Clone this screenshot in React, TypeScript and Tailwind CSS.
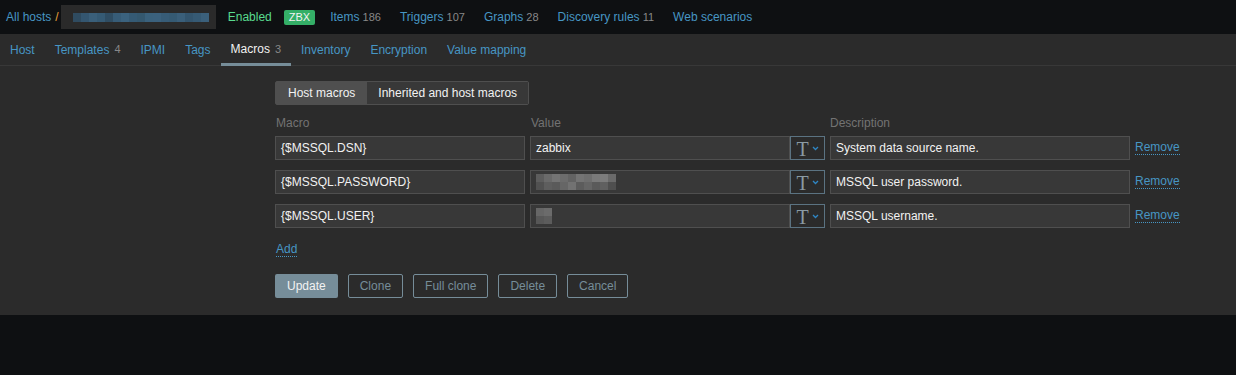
import React from "react";

const font = { fontFamily: '"Liberation Sans", Arial, sans-serif' };

function Blur({ cells, h }: { cells: string[][]; h: number }) {
  return (
    <div className="flex flex-col">
      {cells.map((row, i) => (
        <div key={i} className="flex">
          {row.map((c, j) => (
            <div key={j} className="w-[8px]" style={{ height: h, background: c }} />
          ))}
        </div>
      ))}
    </div>
  );
}

const hostBlur = [
  ["#2f4b60", "#345670", "#3a5f7a", "#355a74", "#2f4d63", "#375c77", "#3b627e", "#355a74", "#34586f", "#3a617c", "#3b617d", "#375c77", "#355a73", "#3a5f7a", "#33556e", "#365a74", "#3b607b"],
];

const pwBlur = [
  ["#5d5d5d", "#6a6a6a", "#747474", "#6c6c6c", "#636363", "#747474", "#6f6f6f", "#7a7a7a", "#7c7c7c", "#6a6a6a"],
  ["#515151", "#5e5e5e", "#5a5a5a", "#666666", "#727272", "#5c5c5c", "#656565", "#5a5a5a", "#606060", "#4f4f4f"],
];

const userBlur = [["#666666", "#6b6b6b"], ["#575757", "#5c5c5c"]];

function TopLink({ label, count }: { label: string; count?: string }) {
  return (
    <span className="text-[#4796c4] mr-[19px]">
      {label}
      {count && <span className="text-[#888888] text-[11px]"> {count}</span>}
    </span>
  );
}

const tabs = [
  { l: "Host" },
  { l: "Templates", c: "4" },
  { l: "IPMI" },
  { l: "Tags" },
  { l: "Macros", c: "3", active: true },
  { l: "Inventory" },
  { l: "Encryption" },
  { l: "Value mapping" },
];

function TypeBtn() {
  return (
    <div className="w-[35px] h-[24px] border border-[#5b7382] bg-[#2b2b2b] flex items-center justify-center gap-[3px]">
      <span className="text-[#8a9aa3] text-[20px] leading-none mt-[1px]" style={{ fontFamily: '"Liberation Serif", serif' }}>
        T
      </span>
      <svg width="7" height="5" viewBox="0 0 7 5">
        <path d="M1 1l2.5 2.5L6 1" stroke="#2f86c4" strokeWidth="1.3" fill="none" />
      </svg>
    </div>
  );
}

function Row({ macro, value, desc }: { macro: string; value: React.ReactNode; desc: string }) {
  return (
    <div className="flex items-center h-[24px] mb-[10px]">
      <div className="w-[250px] h-[24px] bg-[#383838] border border-[#4f4f4f] px-[5px] flex items-center text-[#f2f2f2]">{macro}</div>
      <div className="w-[260px] h-[24px] ml-[5px] bg-[#383838] border border-[#4f4f4f] px-[5px] flex items-center text-[#f2f2f2]">{value}</div>
      <TypeBtn />
      <div className="w-[300px] h-[24px] ml-[5px] bg-[#383838] border border-[#4f4f4f] px-[5px] flex items-center text-[#f2f2f2]">{desc}</div>
      <span className="ml-[5px] text-[#4796c4] border-b border-dotted border-[#4796c4] leading-[13px]">Remove</span>
    </div>
  );
}

function OutBtn({ label }: { label: string }) {
  return (
    <div className="h-[24px] px-[11px] ml-[10px] border border-[#768d99] rounded-[2px] text-[#768d99] flex items-center">{label}</div>
  );
}

export default function App() {
  return (
    <div className="min-h-[375px] bg-[#0e1012] text-[12px]" style={font}>
      <div className="h-[34px] flex items-center pl-[6px] bg-[#0e1012]">
        <span className="text-[#4796c4]">All hosts</span>
        <span className="text-[#e8a33a] ml-[4px]">/</span>
        <div className="ml-[2px] w-[155px] h-[24px] bg-[#2a2a2a] flex items-center pl-[12px]">
          <Blur cells={hostBlur} h={9} />
        </div>
        <span className="ml-[12px] text-[#59db8f]">Enabled</span>
        <span className="ml-[12px] bg-[#34af67] text-[#f2f2f2] text-[11px] px-[5px] h-[15px] leading-[15px] rounded-[2px] mr-[15px]">ZBX</span>
        <TopLink label="Items" count="186" />
        <TopLink label="Triggers" count="107" />
        <TopLink label="Graphs" count="28" />
        <TopLink label="Discovery rules" count="11" />
        <TopLink label="Web scenarios" />
      </div>
      <div className="bg-[#2b2b2b]">
        <div className="h-[32px] flex items-stretch border-b border-[#383838]">
          {tabs.map((t) => (
            <div
              key={t.l}
              className={
                t.active
                  ? "px-[10px] flex items-center text-[#f2f2f2] border-b-[3px] border-[#768d99] pt-[1px] mb-[-1px]"
                  : "px-[10px] flex items-center text-[#4796c4]"
              }
            >
              {t.l}
              {t.c && <span className="text-[#888888] text-[11px] ml-[5px]">{t.c}</span>}
            </div>
          ))}
        </div>
        <div className="pl-[275px] pt-[15px] pb-[17px]">
          <div className="flex w-fit border border-[#4f4f4f] rounded-[2px] h-[24px]">
            <div className="bg-[#4f4f4f] text-[#f2f2f2] px-[12px] flex items-center">Host macros</div>
            <div className="bg-[#383838] text-[#f2f2f2] px-[11px] flex items-center">Inherited and host macros</div>
          </div>
          <div className="flex text-[#737373] mt-[11px] h-[15px] leading-[15px] mb-[5px]">
            <span className="w-[255px] pl-[1px]">Macro</span>
            <span className="w-[300px] pl-[1px]">Value</span>
            <span>Description</span>
          </div>
          <Row macro="{$MSSQL.DSN}" value="zabbix" desc="System data source name." />
          <Row macro="{$MSSQL.PASSWORD}" value={<Blur cells={pwBlur} h={8} />} desc="MSSQL user password." />
          <Row macro="{$MSSQL.USER}" value={<Blur cells={userBlur} h={8} />} desc="MSSQL username." />
          <div className="mt-[12px]">
            <span className="text-[#4796c4] border-b border-dotted border-[#4796c4] leading-[13px] ml-[1px]">Add</span>
          </div>
          <div className="flex mt-[16px]">
            <div className="h-[24px] px-[12px] bg-[#768d99] text-[#f2f2f2] rounded-[2px] flex items-center">Update</div>
            <OutBtn label="Clone" />
            <OutBtn label="Full clone" />
            <OutBtn label="Delete" />
            <OutBtn label="Cancel" />
          </div>
        </div>
      </div>
    </div>
  );
}
